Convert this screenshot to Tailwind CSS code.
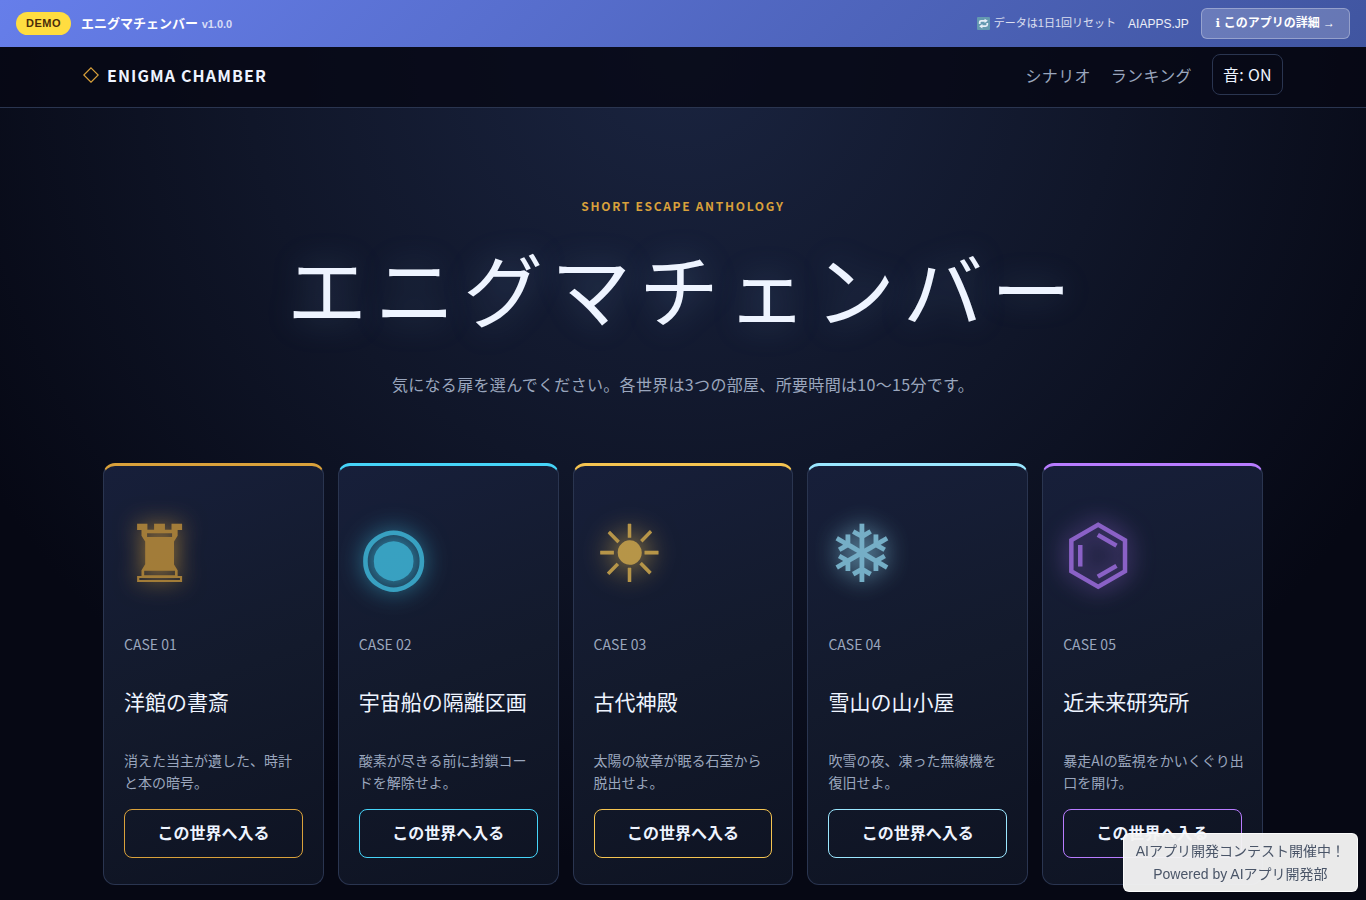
<!DOCTYPE html>
<html lang="ja">
<head>
<meta charset="utf-8">
<meta name="viewport" content="width=device-width, initial-scale=1">
<title>エニグマチェンバー</title>
<script src="https://cdn.jsdelivr.net/npm/@tailwindcss/browser@4"></script>
</head>
<body class="min-h-screen bg-[#060814] font-['Liberation_Sans','Noto_Sans_CJK_JP',sans-serif] text-[#eef4ff]">
<div class="flex h-[47px] items-center justify-between bg-linear-135 from-[#667eea] to-[#4055a0] px-4 text-white">
  <div class="flex items-center gap-[10px]">
    <span class="rounded-full bg-[#ffdd40] px-[10px] py-1 text-[11px] leading-[15px] font-bold tracking-[0.5px] text-[#4a2c0a]">DEMO</span>
    <p class="text-[13px] leading-5 font-bold">エニグマチェンバー <span class="text-[11px] text-white/75">v1.0.0</span></p>
  </div>
  <div class="flex items-center gap-3">
    <span class="flex items-center gap-1 text-[11px] text-white/80">
      <svg class="size-[13px]" viewBox="0 0 12 12" fill="none" aria-hidden="true"><rect width="12" height="12" rx="1" fill="#6499b0"/><path d="M2.500 6.500V5q0-1.500 1.500-1.500H7.500M9.500 5.500V7q0 1.500-1.500 1.500H4.500" stroke="#e6eef8" stroke-width="1.600"/><path d="M7 1.500 10 3.500 7 5.500zM5 6.500 2 8.500l3 2z" fill="#e6eef8"/></svg>
      データは1日1回リセット</span>
    <a href="#" class="text-[12px] text-white/90">AIAPPS.JP</a>
    <a href="#" class="rounded-md border border-white/30 bg-white/20 px-[14px] py-[6px] text-[12px] leading-[17px] font-bold"><span class="font-['DejaVu_Sans']">ℹ</span> このアプリの詳細 →</a>
  </div>
</div>
<div class="bg-[radial-gradient(circle_at_50%_0%,#1a2440_0%,#101629_40%,#060814_75%)] font-['Noto_Sans_CJK_JP',sans-serif] tracking-[0.02em]">
  <header class="border-b border-[#2a3550] bg-[#060814]/80">
    <div class="mx-auto flex h-[60px] max-w-[1200px] items-center justify-between pb-[5px]">
      <a href="#" class="flex items-center gap-2 font-bold tracking-[0.07em]">
        <svg class="size-4" viewBox="0 0 16 16" fill="none" stroke="#d9a13b" stroke-width="1.200" aria-hidden="true"><path d="M8 .8 15.200 8 8 15.200.8 8z"/></svg>
        ENIGMA CHAMBER</a>
      <nav class="flex items-center gap-5 text-[#9aa6bd]">
        <a href="#">シナリオ</a>
        <a href="#">ランキング</a>
        <button type="button" class="rounded-lg border border-[#2a3550] px-[10px] pt-[7px] pb-2 leading-6 text-[#eef4ff]">音: ON</button>
      </nav>
    </div>
  </header>
  <main class="mx-auto max-w-[1200px] px-5 pb-4">
    <section class="pt-[88px] pb-[65px] text-center">
      <p class="text-[12px] leading-5 font-bold tracking-[0.14em] text-[#d9a13b]">SHORT ESCAPE ANTHOLOGY</p>
      <h1 class="mt-[14px] text-[80px] leading-[112px] tracking-[0.1em] [text-shadow:0_0_34px_#96c8ff40]">エニグマチェンバー</h1>
      <p class="mt-7 text-[16px] leading-7 text-[#9aa6bd]">気になる扉を選んでください。各世界は3つの部屋、所要時間は10〜15分です。</p>
    </section>
    <section class="grid grid-cols-5 gap-[14px]">
      <article class="flex flex-col rounded-xl border border-t-3 border-[#2a3550] border-t-[#d9a13b] bg-linear-160 from-[#171f3a] via-[#131a2c] to-[#0e1322] px-5 pt-[25px] pb-[26px]">
        <div class="h-32 font-['DejaVu_Sans'] text-[80px] leading-[128px] tracking-normal text-[#d9a13b] opacity-72 [text-shadow:0_0_24px]">♜</div>
        <p class="mt-[13px] text-[14px] leading-6 tracking-normal text-[#9aa6bd]">CASE 01</p>
        <h2 class="mt-[27px] text-[21px] leading-9 tracking-normal">洋館の書斎</h2>
        <p class="mt-[30px] text-[14px] leading-[22px] tracking-normal text-[#9aa6bd]">消えた当主が遺した、時計と本の暗号。</p>
        <button type="button" class="mt-4 rounded-lg border border-[#d9a13b] pt-[10px] pb-3 leading-[25px] font-bold tracking-normal">この世界へ入る</button>
      </article>
      <article class="flex flex-col rounded-xl border border-t-3 border-[#2a3550] border-t-[#46d4f8] bg-linear-160 from-[#171f3a] via-[#131a2c] to-[#0e1322] px-5 pt-[25px] pb-[26px]">
        <div class="h-32 font-['DejaVu_Sans'] text-[80px] leading-[128px] tracking-normal text-[#46d4f8] opacity-72 [text-shadow:0_0_24px]">◉</div>
        <p class="mt-[13px] text-[14px] leading-6 tracking-normal text-[#9aa6bd]">CASE 02</p>
        <h2 class="mt-[27px] text-[21px] leading-9 tracking-normal">宇宙船の隔離区画</h2>
        <p class="mt-[30px] text-[14px] leading-[22px] tracking-normal text-[#9aa6bd]">酸素が尽きる前に封鎖コードを解除せよ。</p>
        <button type="button" class="mt-4 rounded-lg border border-[#46d4f8] pt-[10px] pb-3 leading-[25px] font-bold tracking-normal">この世界へ入る</button>
      </article>
      <article class="flex flex-col rounded-xl border border-t-3 border-[#2a3550] border-t-[#f5c451] bg-linear-160 from-[#171f3a] via-[#131a2c] to-[#0e1322] px-5 pt-[25px] pb-[26px]">
        <div class="h-32 font-['DejaVu_Sans'] text-[80px] leading-[128px] tracking-normal text-[#f5c451] opacity-72 [text-shadow:0_0_24px]">☀</div>
        <p class="mt-[13px] text-[14px] leading-6 tracking-normal text-[#9aa6bd]">CASE 03</p>
        <h2 class="mt-[27px] text-[21px] leading-9 tracking-normal">古代神殿</h2>
        <p class="mt-[30px] text-[14px] leading-[22px] tracking-normal text-[#9aa6bd]">太陽の紋章が眠る石室から脱出せよ。</p>
        <button type="button" class="mt-4 rounded-lg border border-[#f5c451] pt-[10px] pb-3 leading-[25px] font-bold tracking-normal">この世界へ入る</button>
      </article>
      <article class="flex flex-col rounded-xl border border-t-3 border-[#2a3550] border-t-[#9be7ff] bg-linear-160 from-[#171f3a] via-[#131a2c] to-[#0e1322] px-5 pt-[25px] pb-[26px]">
        <div class="h-32 font-['DejaVu_Sans'] text-[80px] leading-[128px] tracking-normal text-[#9be7ff] opacity-72 [text-shadow:0_0_24px]">❄</div>
        <p class="mt-[13px] text-[14px] leading-6 tracking-normal text-[#9aa6bd]">CASE 04</p>
        <h2 class="mt-[27px] text-[21px] leading-9 tracking-normal">雪山の山小屋</h2>
        <p class="mt-[30px] text-[14px] leading-[22px] tracking-normal text-[#9aa6bd]">吹雪の夜、凍った無線機を復旧せよ。</p>
        <button type="button" class="mt-4 rounded-lg border border-[#9be7ff] pt-[10px] pb-3 leading-[25px] font-bold tracking-normal">この世界へ入る</button>
      </article>
      <article class="flex min-w-0 flex-col rounded-xl border border-t-3 border-[#2a3550] border-t-[#b87cff] bg-linear-160 from-[#171f3a] via-[#131a2c] to-[#0e1322] px-5 pt-[25px] pb-[26px]">
        <div class="h-32 font-['DejaVu_Sans'] text-[80px] leading-[128px] tracking-normal text-[#b87cff] opacity-72 [text-shadow:0_0_24px]">⌬</div>
        <p class="mt-[13px] text-[14px] leading-6 tracking-normal text-[#9aa6bd]">CASE 05</p>
        <h2 class="mt-[27px] text-[21px] leading-9 tracking-normal">近未来研究所</h2>
        <p class="mt-[30px] text-[14px] leading-[22px] tracking-normal whitespace-nowrap text-[#9aa6bd]">暴走AIの監視をかいくぐり出<br>口を開け。</p>
        <button type="button" class="mt-4 rounded-lg border border-[#b87cff] pt-[10px] pb-3 leading-[25px] font-bold tracking-normal">この世界へ入る</button>
      </article>
    </section>
  </main>
</div>
<aside class="fixed right-2 bottom-2 rounded-md border border-white/80 bg-[#f4f4f4]/96 px-3 pt-[6px] pb-[5px] text-center text-[14px] leading-[23px] text-[#4a5568]">
  <p>AIアプリ開発コンテスト開催中！</p>
  <p>Powered by <a href="#">AIアプリ開発部</a></p>
</aside>
</body>
</html>
